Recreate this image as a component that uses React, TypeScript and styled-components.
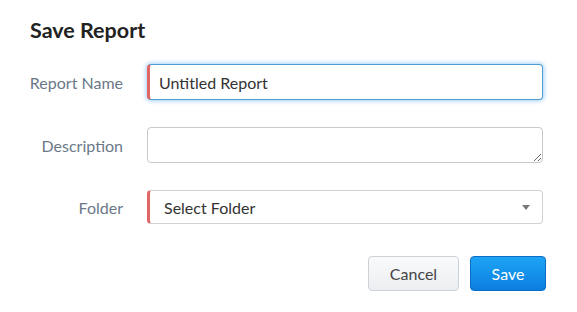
import React from "react";
import styled, { createGlobalStyle } from "styled-components";

const Global = createGlobalStyle`
  html, body { margin: 0; padding: 0; background: #fff; }
  body { font-family: Lato, "Noto Sans", sans-serif; }
`;

const Dialog = styled.div`
  width: 577px;
  height: 312px;
  box-sizing: border-box;
  padding: 17px 0 0 30px;
  display: flex;
  flex-direction: column;
`;

const Title = styled.h2`
  margin: 0;
  font-size: 21.5px;
  line-height: 26px;
  font-weight: 700;
  color: #222;
`;

const Form = styled.div`
  margin-top: 21px;
  display: grid;
  grid-template-columns: 93px 396px;
  column-gap: 24px;
  row-gap: 27px;
  align-items: center;
`;

const Label = styled.label`
  justify-self: end;
  white-space: nowrap;
  text-align: right;
  font-size: 16px;
  color: #6b7888;
`;

const fieldBase = `
  box-sizing: border-box;
  width: 396px;
  height: 36px;
  border-radius: 4px;
  background: #fff;
  font-family: Lato, "Noto Sans", sans-serif;
  font-size: 16px;
  color: #333;
  outline: none;
`;

const TextInput = styled.input`
  ${fieldBase}
  border: 1px solid #4f9dd3;
  border-left: 3px solid #e06565;
  box-shadow: 0 0 4px 1px rgba(82, 168, 236, 0.55);
  padding: 0 0 0 9px;
`;

const TextArea = styled.textarea`
  ${fieldBase}
  display: block;
  border: 1px solid #c9c9c9;
  padding: 6px 10px;
  resize: vertical;
`;

const SelectBox = styled.div`
  ${fieldBase}
  height: 34px;
  border: 1px solid #d2d2d2;
  border-left: 3px solid #e06565;
  padding: 0 12px 0 14px;
  display: flex;
  align-items: center;
  justify-content: space-between;
`;

const Caret = styled.span`
  width: 0;
  height: 0;
  border-left: 4px solid transparent;
  border-right: 4px solid transparent;
  border-top: 5px solid #7a7a7a;
`;

const Actions = styled.div`
  width: 516px;
  margin-top: 32px;
  display: flex;
  justify-content: flex-end;
  gap: 11px;
`;

const Button = styled.button<{ $primary?: boolean }>`
  box-sizing: border-box;
  height: 35px;
  padding: 0;
  width: ${(p) => (p.$primary ? "76px" : "91px")};
  border-radius: 4px;
  font-family: Lato, "Noto Sans", sans-serif;
  font-size: 16px;
  cursor: pointer;
  border: 1px solid ${(p) => (p.$primary ? "#0a6fc4" : "#cdd2d8")};
  color: ${(p) => (p.$primary ? "#fff" : "#444")};
  background: ${(p) =>
    p.$primary
      ? "linear-gradient(#1ea4f5, #0b7ee0)"
      : "linear-gradient(#f9fafb, #eceef1)"};
`;

export default function App() {
  return (
    <>
      <Global />
      <Dialog>
        <Title>Save Report</Title>
        <Form>
          <Label>Report Name</Label>
          <TextInput defaultValue="Untitled Report" />
          <Label>Description</Label>
          <TextArea />
          <Label>Folder</Label>
          <SelectBox>
            <span>Select Folder</span>
            <Caret />
          </SelectBox>
        </Form>
        <Actions>
          <Button>Cancel</Button>
          <Button $primary>Save</Button>
        </Actions>
      </Dialog>
    </>
  );
}
